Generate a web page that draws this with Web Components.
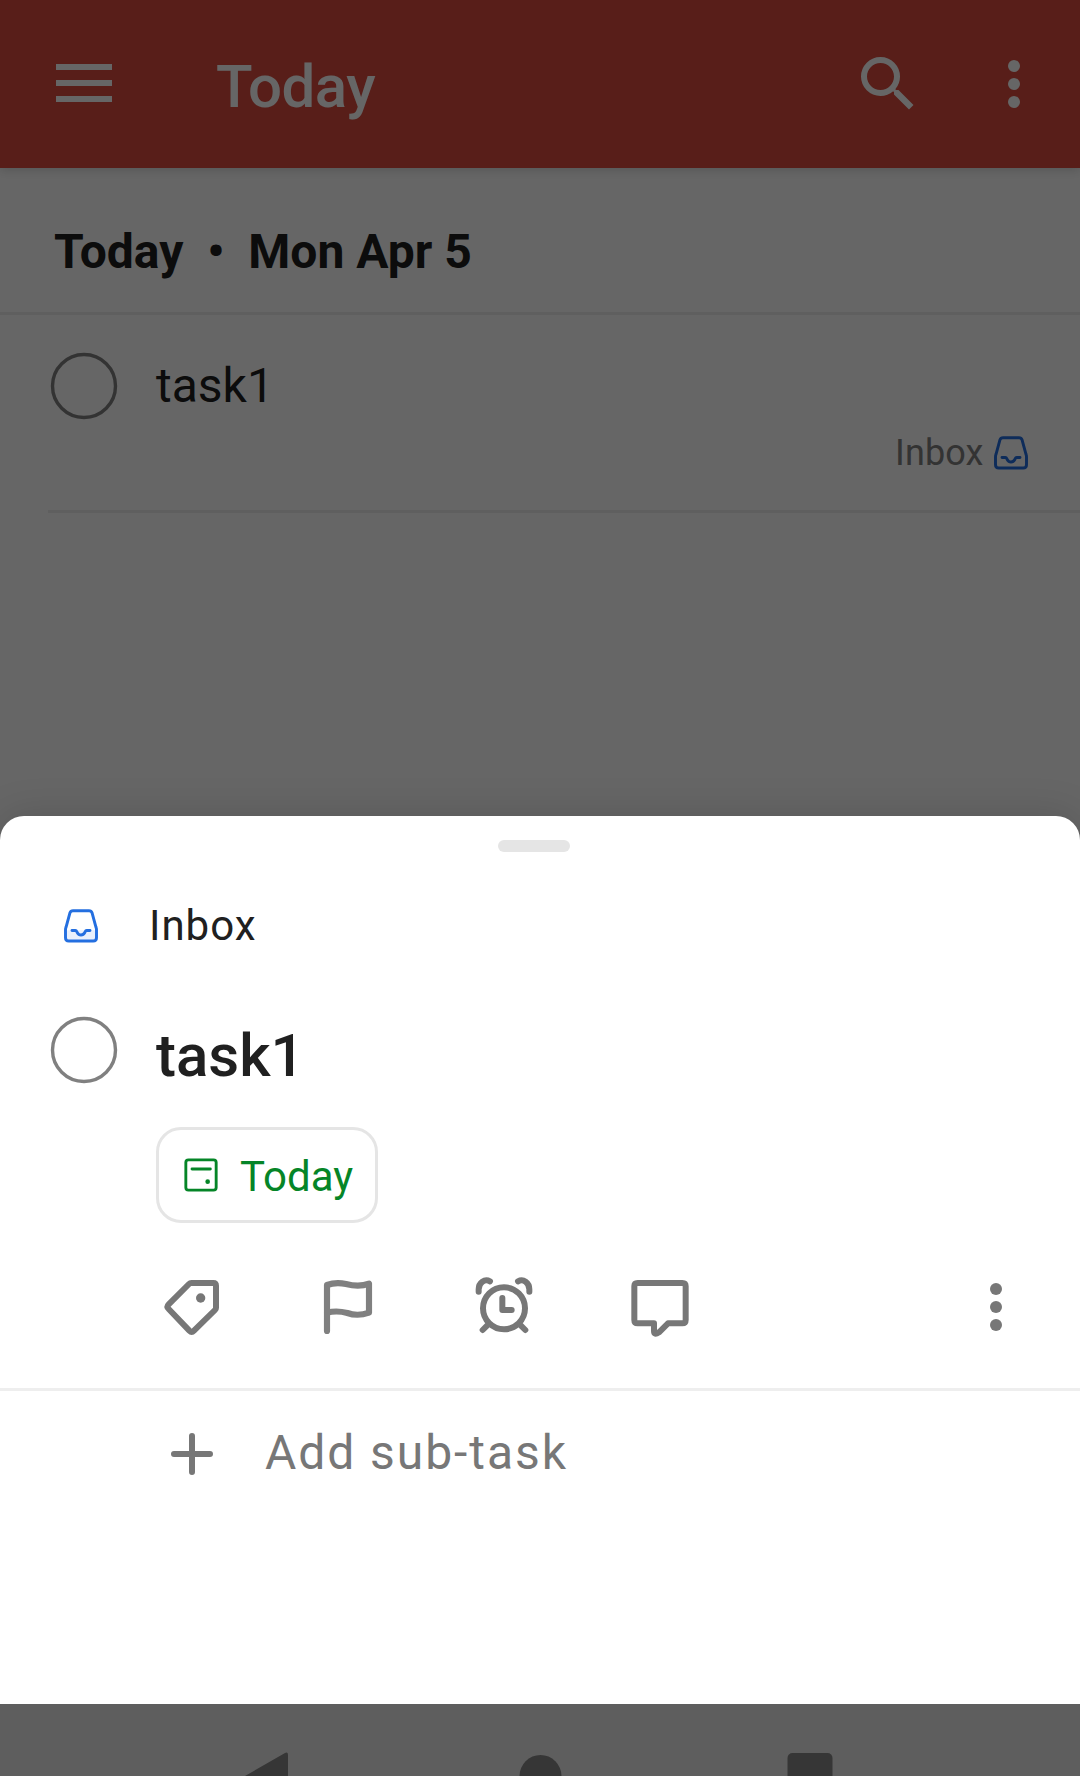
<!DOCTYPE html>
<html lang="en">
<head>
<meta charset="utf-8">
<title>Today</title>
<style>
html,body{margin:0;height:100%;overflow:hidden;background:#fff}
body{font-family:Roboto,"Noto Sans",sans-serif;color:#202020}
</style>
</head>
<body>
<todo-app></todo-app>
<script>
const define = (name, html) => customElements.define(name, class extends HTMLElement {
  constructor() {
    super();
    this.attachShadow({ mode: 'open' }).innerHTML = html;
  }
});

const INBOX = `<path fill="var(--tray,none)" stroke="none" d="M198 391h92v22q0 10-10 10h-72q-10 0-10-10z"/>
<path d="M219 332h48q7 0 9 6l12 44q1.500 4 1.500 8v23q0 10-10 10h-73q-10 0-10-10v-23q0-4 1.500-8l12-44q2-6 9-6z"/>
<path d="M216 391.500h10c4 0 4 3 6 6.500 5 9 17 9 22 0 2-3.500 2-6.500 6-6.500h10"/>`;
/* name: [box size in px, viewBox, stroke width, shapes] */
const ICONS = {
  menu: [72, '0 0 72 72', 0, '<path fill="currentColor" d="M8 16h56v6H8zM8 32h56v6H8zM8 48h56v6H8z"/>'],
  search: [72, '0 0 24 24', 0, '<path fill="currentColor" d="M15.500 14h-.79l-.28-.27A6.471 6.471 0 0 0 16 9.500 6.500 6.500 0 1 0 9.500 16c1.610 0 3.090-.59 4.230-1.570l.27.28v.79l5 4.990L20.490 19l-4.990-5zm-6 0C7.010 14 5 11.990 5 9.500S7.010 5 9.500 5 14 7.010 14 9.500 11.990 14 9.500 14z"/>'],
  more: [72, '0 0 24 24', 0, '<g fill="currentColor"><circle cx="12" cy="6" r="2"/><circle cx="12" cy="12" r="2"/><circle cx="12" cy="18" r="2"/></g>'],
  inbox: [36, '189 324 108 108', 8.8, INBOX],
  date: [36, '159 141 108 108', 8.6, '<rect x="167.500" y="149.500" width="91" height="91" rx="8"/><path d="M186 177h55"/><circle cx="233" cy="215" r="7" fill="currentColor" stroke="none"/>'],
  label: [72, '48 63 216 216', 18, '<path d="M154 99h66q8 0 8 8v66q0 4-3 7l-63 62q-7 7-14 0l-62-65q-7-7 0-14l61-61q3-3 7-3z"/><circle cx="182" cy="144" r="14" fill="currentColor" stroke="none"/>'],
  flag: [72, '516 63 216 216', 18.5, '<path d="M561 243V105C580 98 600 98 618 102C640 108 664 110 687 101V188C664 196 642 196 622 189C600 183 580 183 561 188"/>'],
  alarm: [72, '54 63 216 216', 18, '<circle cx="162" cy="175" r="63"/><path d="M157 144v36h28M98 240l14-14M226 240l-14-14M86 125v-7C86 98 104 85 120 94M238 125v-7C238 98 220 85 204 94"/>'],
  comment: [72, '522 63 216 216', 18, '<path d="M563 99h134q10 0 10 10v101q0 10-10 10h-43L627 247q-15 10-15-4v-23h-49q-10 0-10-10V109q0-10 10-10z"/>'],
  plus: [72, '0 0 72 72', 6, '<path d="M36 18v36M18 36h36"/>']
};
customElements.define('ui-icon', class extends HTMLElement {
  connectedCallback() {
    const [size, box, stroke, shapes] = ICONS[this.getAttribute('name')];
    this.attachShadow({ mode: 'open' }).innerHTML = `<style>:host{display:block;flex:none;width:${size}px;height:${size}px}svg{display:block}</style>
<svg width="${size}" height="${size}" viewBox="${box}" fill="none" stroke="${stroke ? 'currentColor' : 'none'}" stroke-width="${stroke}" stroke-linecap="round" stroke-linejoin="round">${shapes}</svg>`;
  }
});

define('task-check', `<style>:host{display:block;flex:none;width:66px;height:66px}svg{display:block;overflow:visible}</style>
<svg width="66" height="66"><circle cx="33" cy="33" r="31.500" fill="none" stroke="#808080" stroke-width="3.400"/></svg>`);

define('app-bar', `<style>
:host{display:flex;align-items:center;flex:none;height:168px;padding:0 30px 0 48px;box-sizing:border-box;background:#db4c3f;color:#fff;box-shadow:0 2px 10px rgba(0,0,0,.17)}
h1{margin:0;flex:1;padding:5px 0 0 96px;font:500 60px/72px Roboto,sans-serif;letter-spacing:-.5px}
.more{margin-left:54px}
</style><ui-icon name="menu"></ui-icon><h1><slot></slot></h1><ui-icon name="search"></ui-icon><ui-icon class="more" name="more"></ui-icon>`);

define('section-header', `<style>
:host{display:block;flex:none;height:147px;box-sizing:border-box;padding:54px 54px 0;border-bottom:3px solid #eee;font-weight:700;font-size:48px;line-height:60px;white-space:pre}
</style><slot></slot>`);

define('task-row', `<style>
:host{display:flex;flex-direction:column;height:198px;box-sizing:border-box;margin-left:48px;border-bottom:3px solid #eee;padding:38px 51px 0 3px}
.main{display:flex;align-items:center;gap:39px;font-size:48px;line-height:66px;height:66px}
.project{display:flex;align-items:center;justify-content:flex-end;gap:9.500px;height:36px;margin-top:16px;font-size:36px;line-height:36px;letter-spacing:.1px;color:#808080}
ui-icon{color:#246fe0}
</style><div class="main"><task-check></task-check><span><slot></slot></span></div>
<div class="project"><span><slot name="project"></slot></span><ui-icon name="inbox"></ui-icon></div>`);

define('system-nav', `<style>
:host{display:block;height:72px;background:#ebebeb;margin-top:auto;overflow:hidden;color:#878787}
div{display:flex;justify-content:space-between;padding:47px 247px 0 243px}
svg{display:block;overflow:visible}
</style><div>
<svg width="47" height="52" fill="currentColor"><path d="M42 2q3-1.500 3 2v44q0 3-3 1L2 28q-2-2 0-3z"/></svg>
<svg width="44" height="52" fill="currentColor"><circle cx="23.500" cy="25" r="21"/></svg>
<svg width="46" height="52" fill="currentColor"><rect x=".5" y="2" width="45" height="45" rx="5"/></svg></div>`);

define('date-chip', `<style>
:host{display:flex;align-items:center;align-self:flex-start;gap:21px;box-sizing:border-box;width:222px;height:96px;margin-left:156px;padding:0 0 0 24px;border:3px solid #e5e5e5;border-radius:25px;color:#058527;font-size:42px}
span{line-height:48px;padding-top:3px}
</style><ui-icon name="date"></ui-icon><span><slot></slot></span>`);

define('task-actions', `<style>
:host{display:flex;gap:84px;height:120px;box-sizing:border-box;margin-top:48px;padding:0 48px 0 156px;border-bottom:3px solid #eee;color:#777}
[name=flag]{color:#808080}.more{margin-left:auto}
</style><ui-icon name="label"></ui-icon><ui-icon name="flag"></ui-icon><ui-icon name="alarm"></ui-icon><ui-icon name="comment"></ui-icon><ui-icon class="more" name="more"></ui-icon>`);

define('add-subtask', `<style>
:host{display:flex;gap:37px;margin-top:27px;padding-left:156px;color:#777;font-size:48px;line-height:70px;letter-spacing:1.930px}
</style><ui-icon name="plus"></ui-icon><span><slot></slot></span>`);

define('task-sheet', `<style>
:host{display:flex;flex-direction:column;box-sizing:border-box;height:888px;background:#fff;border-radius:24px 24px 0 0;box-shadow:0 0 40px rgba(0,0,0,.15);clip-path:inset(-80px 0 0 0)}
.grip{width:72px;height:12px;border-radius:6px;background:#e5e5e5;margin:24px 0 0 498px;flex:none}
.project{display:flex;align-items:center;gap:50px;height:60px;margin:44px 0 0 63px;font-size:42px;line-height:60px;letter-spacing:1px}
.project ui-icon{color:#246fe0;--tray:#e9f0fc}
.title{display:flex;gap:39px;height:66px;margin:61px 0 44px 51px}
h2{margin:0;font-size:60px;font-weight:500;line-height:77px}
</style><div class="grip"></div>
<div class="project"><ui-icon name="inbox"></ui-icon><span><slot name="project"></slot></span></div>
<div class="title"><task-check></task-check><h2><slot name="title"></slot></h2></div>
<date-chip><slot name="date"></slot></date-chip>
<task-actions></task-actions>
<add-subtask>Add sub-task</add-subtask>`);

define('todo-app', `<style>
:host{display:block;position:relative;width:1080px;height:1776px;overflow:hidden}
.page{display:flex;flex-direction:column;height:100%;background:#fff}
app-bar{z-index:1}
.scrim{position:absolute;inset:0;background:rgba(0,0,0,.6);z-index:2}
task-sheet{position:absolute;left:0;right:0;bottom:72px;z-index:3}
</style>
<div class="page"><app-bar>Today</app-bar>
<section-header>Today  •  Mon Apr 5</section-header>
<task-row>task1<span slot="project">Inbox</span></task-row>
<system-nav></system-nav></div>
<div class="scrim"></div>
<task-sheet><span slot="project">Inbox</span><span slot="title">task1</span><span slot="date">Today</span></task-sheet>`);
</script>
</body>
</html>
